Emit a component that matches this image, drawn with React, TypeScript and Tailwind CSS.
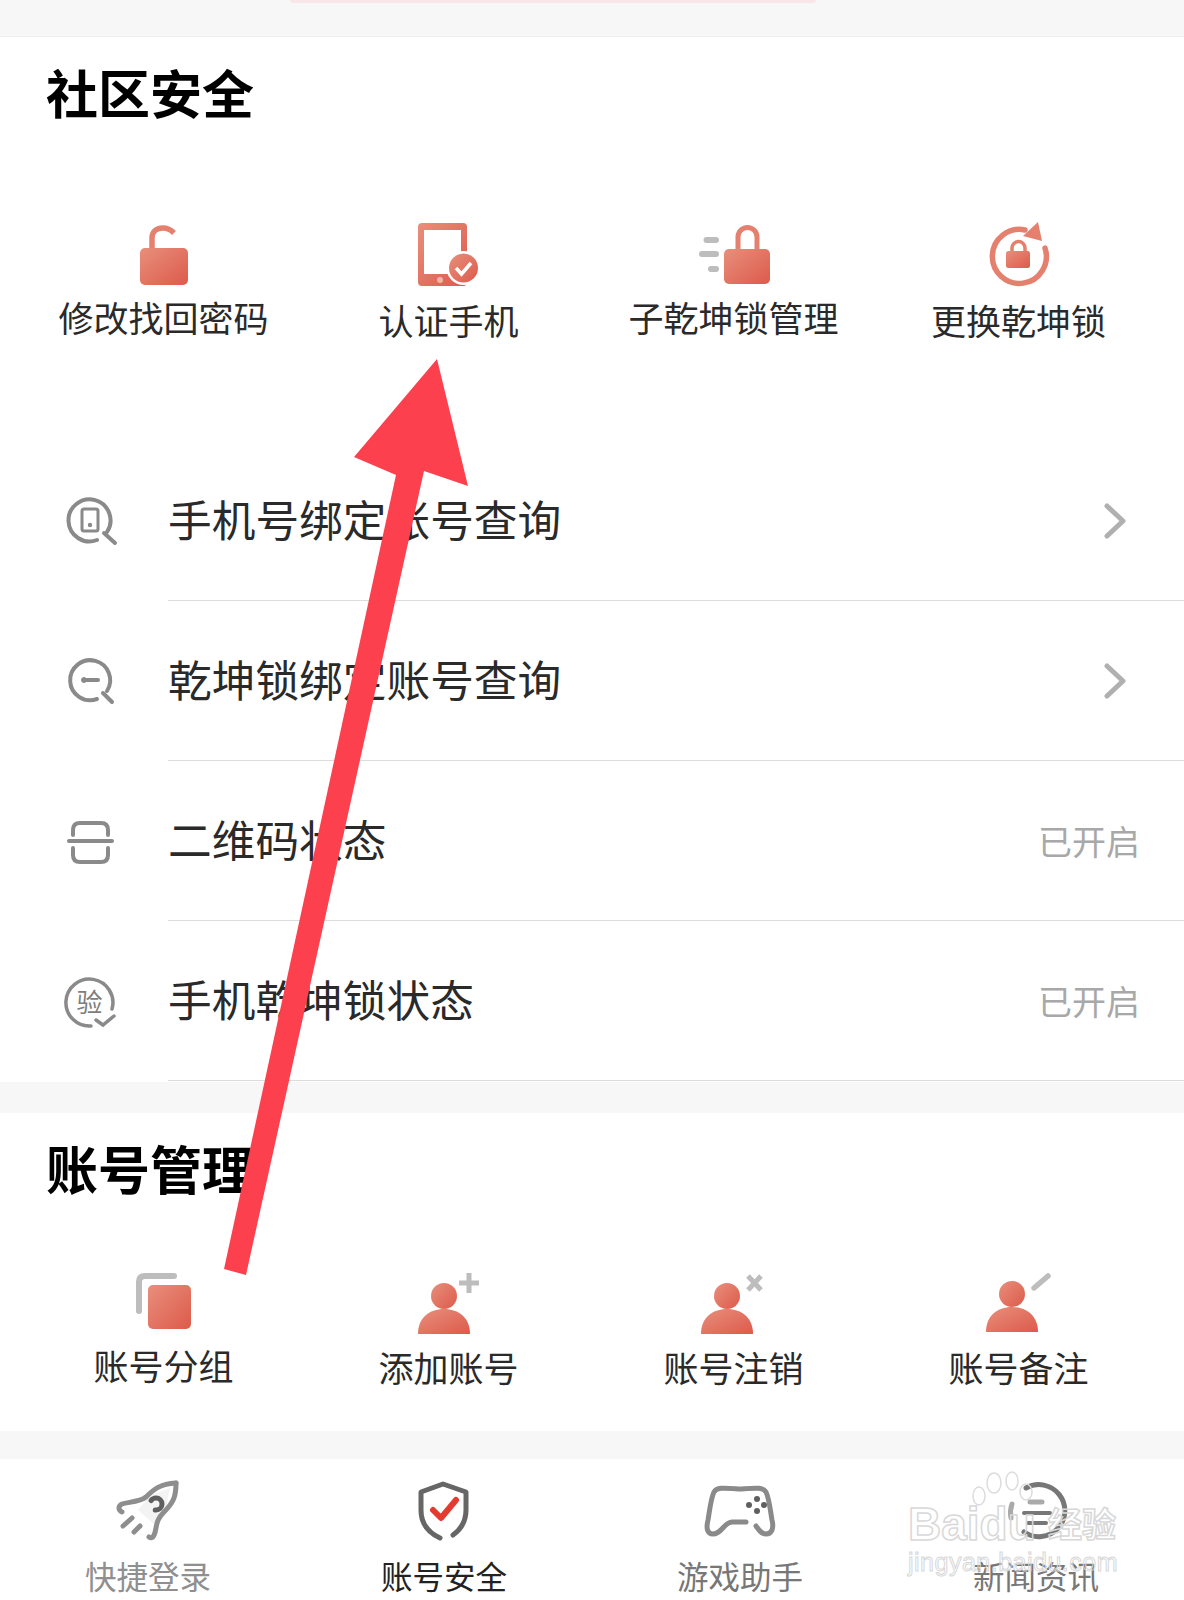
import React from 'react';

const coral = 'url(#coral)';
const grey = '#bdbdbd';
const line = '#8a8a8a';

const UnlockIcon = () => (
  <svg width="80" height="70" viewBox="0 0 80 70" fill="none">
    <path d="M28 28V16C28 9 33 6 39 6C44 6 47 8 50 11" stroke="#e5806e" strokeWidth="5.5" />
    <rect x="16" y="26" width="48" height="37" rx="5" fill={coral} />
  </svg>
);

const PhoneIcon = () => (
  <svg width="80" height="70" viewBox="0 0 80 70" fill="none">
    <path fillRule="evenodd" d="M13 1H54Q58 1 58 5V60Q58 64 54 64H13Q9 64 9 60V5Q9 1 13 1ZM15 8V52H52V8Z" fill={coral} />
    <circle cx="31" cy="58" r="3" fill="#f3b5a8" />
    <circle cx="54.5" cy="46" r="17" fill="#fff" />
    <circle cx="54.5" cy="46" r="14.5" fill={coral} />
    <path d="M47 46L52.5 52L62 41" stroke="#fff" strokeWidth="3.5" />
  </svg>
);

const SubLockIcon = () => (
  <svg width="80" height="70" viewBox="0 0 80 70" fill="none">
    <path d="M12.5 18H22M8 32H22M17 47H22" stroke={grey} strokeWidth="6" strokeLinecap="round" />
    <path d="M44 30V15A9.5 9.5 0 0 1 63 15V30" stroke="#e5806e" strokeWidth="5" />
    <rect x="30" y="27" width="46" height="35" rx="5" fill={coral} />
  </svg>
);

const RotateLockIcon = () => (
  <svg width="80" height="70" viewBox="0 0 80 70" fill="none">
    <path d="M66 26A27 27 0 1 1 46 8" stroke="#e5806e" strokeWidth="5.5" strokeLinecap="round" />
    <path d="M59 0L63 19L44 14Z" fill="#e5806e" />
    <path d="M33 31V26A6.5 6.5 0 0 1 46 26V31" stroke="#e5806e" strokeWidth="3.5" />
    <rect x="27" y="29" width="24" height="17" rx="2.5" fill={coral} />
  </svg>
);

const GroupIcon = () => (
  <svg width="80" height="64" viewBox="0 0 80 64" fill="none">
    <path d="M15 41V12Q15 6 21 6H50" stroke={grey} strokeWidth="6" strokeLinecap="round" />
    <rect x="22" y="13" width="47" height="48" rx="6" fill="#fff" />
    <rect x="24" y="15" width="43" height="44" rx="5" fill={coral} />
  </svg>
);

const Person = ({ x, y = 26 }: { x: number; y?: number }) => (
  <>
    <circle cx={x} cy={y} r="13" fill={coral} />
    <path d={`M${x - 26} ${y + 38}C${x - 26} ${y + 22} ${x - 15} ${y + 13} ${x} ${y + 13}C${x + 15} ${y + 13} ${x + 26} ${y + 22} ${x + 26} ${y + 38}Z`} fill={coral} />
  </>
);

const AddUserIcon = () => (
  <svg width="80" height="64" viewBox="0 0 80 64" fill="none">
    <Person x={35} />
    <path d="M60 3V23M50 13H70" stroke={grey} strokeWidth="5" />
  </svg>
);

const RemoveUserIcon = () => (
  <svg width="80" height="64" viewBox="0 0 80 64" fill="none">
    <Person x={33} />
    <path d="M54 6L67 20M67 6L54 20" stroke={grey} strokeWidth="5" />
  </svg>
);

const NoteUserIcon = () => (
  <svg width="80" height="64" viewBox="0 0 80 64" fill="none">
    <Person x={33} y={24} />
    <path d="M55 18L69 6" stroke={grey} strokeWidth="5.5" strokeLinecap="round" />
  </svg>
);

const SearchPhoneIcon = () => (
  <svg width="60" height="60" viewBox="0 0 60 60" fill="none" stroke={line} strokeWidth="4" strokeLinecap="round">
    <path d="M37 49A21 21 0 1 1 47 41" />
    <path d="M44 42L55 52" />
    <rect x="22" y="18" width="16" height="22" rx="2" strokeWidth="3" />
    <circle cx="30" cy="34" r="1.2" strokeWidth="2" />
  </svg>
);

const SearchLockIcon = () => (
  <svg width="60" height="60" viewBox="0 0 60 60" fill="none" stroke={line} strokeWidth="4" strokeLinecap="round">
    <path d="M37 48A20 20 0 1 1 47 40" />
    <path d="M43 42L52 51" />
    <path d="M25 29H38" />
    <circle cx="24" cy="29" r="2.5" fill={line} strokeWidth="1" />
  </svg>
);

const ScanIcon = () => (
  <svg width="60" height="60" viewBox="0 0 60 60" fill="none" stroke={line} strokeWidth="4" strokeLinecap="round">
    <path d="M13 24V19Q13 12 20 12H41Q48 12 48 19V24" />
    <path d="M9 30H52" />
    <path d="M13 37V44Q13 51 20 51H41Q48 51 48 44V37" />
  </svg>
);

const VerifyIcon = () => (
  <svg width="60" height="60" viewBox="0 0 60 60" fill="none" stroke={line} strokeWidth="3.5" strokeLinecap="round">
    <path d="M31 55A23.5 23.5 0 1 1 52 38" />
    <path d="M36 49L43 54L54 45" />
    <text x="29.5" y="41" fontSize="26" textAnchor="middle" fill="#7d7d7d" stroke="none" fontFamily="'Noto Sans CJK SC', sans-serif">验</text>
  </svg>
);

const RocketIcon = () => (
  <svg width="64" height="64" viewBox="0 0 64 64" fill="none" stroke="#8e8e8e" strokeWidth="5" strokeLinecap="round" strokeLinejoin="round">
    <path d="M22 30L38 44L50 28L54 8L34 16Z" fill="#f3f3f3" stroke="none" />
    <path d="M60 3C60 16 58 22 48 32C42 38 41 42 40 48C39 54 37 60 33 57" />
    <path d="M60 3C44 4 38 9 30 17C24 22 12 22 6 24C2 26 2 30 6 32" />
    <circle cx="40" cy="24" r="6" stroke="#5f5f5f" strokeWidth="5" strokeDasharray="26 12" strokeDashoffset="-22" />
    <path d="M7 46L16 38M18 52L24 46" />
  </svg>
);

const ShieldIcon = () => (
  <svg width="64" height="64" viewBox="0 0 64 64" fill="none">
    <path d="M28 58C15 52 9 42 9 30V12L31 4L54 12V30C54 42 48 50 41 55" stroke="#666" strokeWidth="5" strokeLinecap="round" strokeLinejoin="round" />
    <path d="M21 30L29 38L44 20" stroke="#e53a2f" strokeWidth="6" strokeLinecap="round" strokeLinejoin="round" />
  </svg>
);

const GamepadIcon = () => (
  <svg width="72" height="64" viewBox="0 0 72 64" fill="none" stroke="#8a8a8a" strokeWidth="5" strokeLinecap="round">
    <path d="M42 42H28C20 42 18 54 9 54C3 54 2 48 4 40C6 28 7 18 10 12C13 7 20 8 36 9C52 8 59 7 62 12C65 18 66 28 68 40C70 48 68 54 62 54C57 54 55 50 52 46" />
    <g fill="#5f5f5f" stroke="none">
      <circle cx="45" cy="25" r="3" />
      <circle cx="53" cy="19" r="3" />
      <circle cx="53" cy="31" r="3" />
      <circle cx="60" cy="25" r="3" />
    </g>
  </svg>
);

const NewsIcon = () => (
  <svg width="64" height="64" viewBox="0 0 64 64" fill="none" stroke="#777" strokeWidth="5" strokeLinecap="round">
    <path d="M22 8A26 26 0 1 1 20 52" />
    <path d="M8 24A26 26 0 0 0 7 38" stroke="#aaa" />
    <path d="M26 22H38" stroke="#aaa" />
    <path d="M20 33H46" stroke="#777" strokeWidth="4" />
    <path d="M24 43H42" stroke="#777" strokeWidth="4" />
  </svg>
);

const Chevron = () => (
  <svg width="24" height="36" viewBox="0 0 24 36" fill="none" stroke="#b0b0b0" strokeWidth="5" strokeLinecap="round" strokeLinejoin="round">
    <path d="M4 3L20 18L4 33" />
  </svg>
);

interface TileProps {
  icon: React.ReactNode;
  label: string;
  labelClass: string;
}

const Tile = ({ icon, label, labelClass }: TileProps) => (
  <div className="flex flex-col items-center">
    {icon}
    <span className={`text-[35px] leading-[50px] text-[#2a2a2a] whitespace-nowrap ${labelClass}`}>{label}</span>
  </div>
);

const rows = [
  { icon: <SearchPhoneIcon />, label: '手机号绑定账号查询', chevron: true },
  { icon: <SearchLockIcon />, label: '乾坤锁绑定账号查询', chevron: true },
  { icon: <ScanIcon />, label: '二维码状态', value: '已开启' },
  { icon: <VerifyIcon />, label: '手机乾坤锁状态', value: '已开启' },
];

const tabs = [
  { icon: <RocketIcon />, label: '快捷登录', color: 'text-[#8f8f8f]' },
  { icon: <ShieldIcon />, label: '账号安全', color: 'text-[#222]' },
  { icon: <GamepadIcon />, label: '游戏助手', color: 'text-[#777]' },
  { icon: <NewsIcon />, label: '新闻资讯', color: 'text-[#777]' },
];

export default function App() {
  return (
    <div className="relative w-[1184px] h-[1600px] overflow-hidden bg-[#f7f7f7] font-['Noto_Sans_CJK_SC',sans-serif]">
      {/* shared gradient for the coral icons */}
      <svg className="absolute w-0 h-0">
        <defs>
          <linearGradient id="coral" x1="0" y1="0" x2="1" y2="1">
            <stop offset="0" stopColor="#e88f7c" />
            <stop offset="1" stopColor="#dd5a4b" />
          </linearGradient>
        </defs>
      </svg>

      <div className="h-[37px] border-b border-[#efefef]">
        <div className="ml-[290px] w-[526px] h-[3px] rounded-b-full bg-[#f9e6e8]" />
      </div>

      <section className="bg-white h-[1045px] pt-[25px]">
        <h2 className="pl-[46px] text-[52px] leading-[60px] font-bold text-black">社区安全</h2>
        <div className="mt-[100px] h-[120px] pl-[21px] pr-[23px] grid grid-cols-4">
          <Tile icon={<UnlockIcon />} label="修改找回密码" labelClass="mt-0" />
          <Tile icon={<PhoneIcon />} label="认证手机" labelClass="mt-[3px]" />
          <Tile icon={<SubLockIcon />} label="子乾坤锁管理" labelClass="mt-0" />
          <Tile icon={<RotateLockIcon />} label="更换乾坤锁" labelClass="mt-[3px]" />
        </div>
        <div className="mt-[99px]">
          {rows.map((row) => (
            <div key={row.label} className="flex h-[160px] items-stretch">
              <div className="w-[168px] shrink-0 pl-[60px] flex items-center">{row.icon}</div>
              <div className="flex-1 flex items-center justify-between border-b border-[#dcdcdc] pr-[44px]">
                <span className="text-[43.7px] text-[#2a2a2a] leading-none mb-[3px]">{row.label}</span>
                {row.chevron ? (
                  <span className="mr-[13px]">
                    <Chevron />
                  </span>
                ) : (
                  <span className="text-[34px] text-[#a8a8a8]">{row.value}</span>
                )}
              </div>
            </div>
          ))}
        </div>
      </section>

      <section className="mt-[31px] bg-white h-[318px] pt-[25px]">
        <h2 className="pl-[46px] text-[52px] leading-[60px] font-bold text-black">账号管理</h2>
        <div className="mt-[72px] pl-[21px] pr-[23px] grid grid-cols-4">
          <Tile icon={<GroupIcon />} label="账号分组" labelClass="mt-[6px]" />
          <Tile icon={<AddUserIcon />} label="添加账号" labelClass="mt-[8px]" />
          <Tile icon={<RemoveUserIcon />} label="账号注销" labelClass="mt-[8px]" />
          <Tile icon={<NoteUserIcon />} label="账号备注" labelClass="mt-[8px]" />
        </div>
      </section>

      <nav className="mt-[28px] bg-white h-[141px] grid grid-cols-4 pt-[21px]">
        {tabs.map((tab) => (
          <div key={tab.label} className="flex flex-col items-center">
            {tab.icon}
            <span className={`mt-[8px] text-[31.5px] leading-[46px] whitespace-nowrap ${tab.color}`}>{tab.label}</span>
          </div>
        ))}
      </nav>

      {/* red annotation arrow drawn over the page */}
      <svg className="absolute left-0 top-0 pointer-events-none" width="1184" height="1600" viewBox="0 0 1184 1600">
        <path d="M437 359L468 486L424 471L246 1275L224 1269L396 475L354 457Z" fill="#fc404e" />
      </svg>

      {/* baidu watermark */}
      <div className="absolute left-[908px] top-[1470px] w-[220px] h-[110px] pointer-events-none">
        <svg className="absolute left-[62px] top-0" width="66" height="46" viewBox="0 0 66 46" fill="none" stroke="#dcdcdc" strokeWidth="1.5">
          <ellipse cx="9" cy="26" rx="6" ry="9" />
          <ellipse cx="24" cy="13" rx="7" ry="10" />
          <ellipse cx="42" cy="11" rx="6" ry="9" />
          <ellipse cx="56" cy="22" rx="6" ry="8" />
        </svg>
        <span className="absolute left-0 top-[26px] text-[46px] leading-[56px] font-bold font-['Liberation_Sans',sans-serif] text-transparent [-webkit-text-stroke:1.5px_#d8d8d8] whitespace-nowrap">Baidu</span>
        <span className="absolute left-[140px] top-[28px] text-[34px] leading-[50px] font-bold text-transparent [-webkit-text-stroke:1.5px_#d8d8d8] whitespace-nowrap">经验</span>
        <span className="absolute left-0 top-[76px] text-[25px] leading-[32px] font-['Liberation_Sans',sans-serif] text-transparent [-webkit-text-stroke:1px_#d8d8d8] tracking-[0.5px] whitespace-nowrap">jingyan.baidu.com</span>
      </div>
    </div>
  );
}
